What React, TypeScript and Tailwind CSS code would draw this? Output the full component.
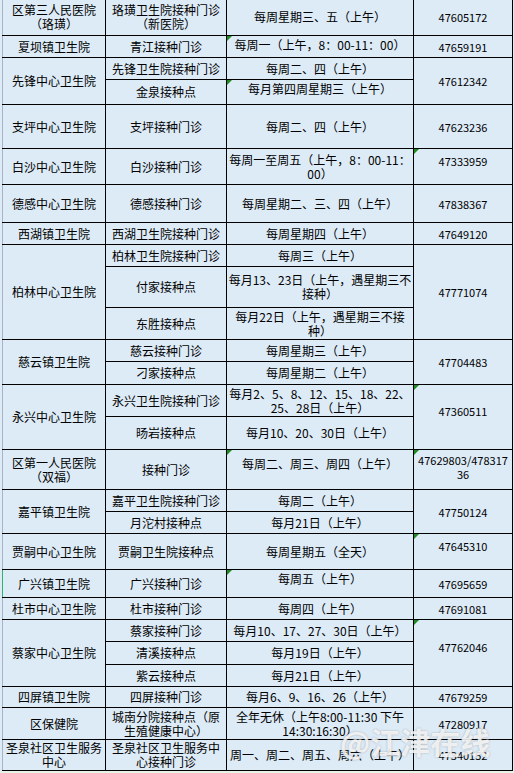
import React from 'react';

type Sub = {
  h: number;
  site: string[];
  time: string[];
  flag?: boolean;
  timeCls?: string;
};

type Group = {
  name: string[];
  phone: string[];
  phoneFlag?: boolean;
  phoneCls?: string;
  mark?: boolean;
  subs: Sub[];
};

const groups: Group[] = [
  {
    name: ['区第三人民医院', '（珞璜）'],
    phone: ['47605172'],
    subs: [{ h: 37, site: ['珞璜卫生院接种门诊', '（新医院）'], time: ['每周星期三、五（上午）'] }],
  },
  {
    name: ['夏坝镇卫生院'],
    phone: ['47659191'],
    subs: [{ h: 22, site: ['青江接种门诊'], time: ['每周一（上午，8：00-11：00）'], flag: true, timeCls: 'pb-[4px]' }],
  },
  {
    name: ['先锋中心卫生院'],
    phone: ['47612342'],
    subs: [
      { h: 22, site: ['先锋卫生院接种门诊'], time: ['每周二、四（上午）'] },
      { h: 25, site: ['金泉接种点'], time: ['每月第四周星期三（上午）'], flag: true, timeCls: 'pb-[7px]' },
    ],
  },
  {
    name: ['支坪中心卫生院'],
    phone: ['47623236'],
    subs: [{ h: 44, site: ['支坪接种门诊'], time: ['每周二、四（上午）'] }],
  },
  {
    name: ['白沙中心卫生院'],
    phone: ['47333959'],
    phoneFlag: true,
    phoneCls: 'pb-[12px]',
    subs: [{ h: 36, site: ['白沙接种门诊'], time: ['每周一至周五（上午，8：00-11：', '00）'] }],
  },
  {
    name: ['德感中心卫生院'],
    phone: ['47838367'],
    subs: [{ h: 38, site: ['德感接种门诊'], time: ['每周星期二、三、四（上午）'] }],
  },
  {
    name: ['西湖镇卫生院'],
    phone: ['47649120'],
    subs: [{ h: 22, site: ['西湖卫生院接种门诊'], time: ['每周星期四（上午）'] }],
  },
  {
    name: ['柏林中心卫生院'],
    phone: ['47771074'],
    subs: [
      { h: 22, site: ['柏林卫生院接种门诊'], time: ['每周三（上午）'] },
      { h: 41, site: ['付家接种点'], time: ['每月13、23日（上午，遇星期三不', '接种）'] },
      { h: 32, site: ['东胜接种点'], time: ['每月22日（上午，遇星期三不接', '种）'] },
    ],
  },
  {
    name: ['慈云镇卫生院'],
    phone: ['47704483'],
    subs: [
      { h: 22, site: ['慈云接种门诊'], time: ['每周星期三（上午）'] },
      { h: 23, site: ['刁家接种点'], time: ['每周星期二（上午）'] },
    ],
  },
  {
    name: ['永兴中心卫生院'],
    phone: ['47360511'],
    phoneFlag: true,
    phoneCls: 'pb-[12px]',
    subs: [
      { h: 32, site: ['永兴卫生院接种门诊'], time: ['每月2、5、8、12、15、18、22、', '25、28日（上午）'] },
      { h: 33, site: ['旸岩接种点'], time: ['每月10、20、30日（上午）'] },
    ],
  },
  {
    name: ['区第一人民医院', '（双福）'],
    phone: ['47629803/478317', '36'],
    phoneFlag: true,
    phoneCls: 'pb-[6px]',
    subs: [{ h: 40, site: ['接种门诊'], time: ['每周二、周三、周四（上午）'], flag: true, timeCls: 'pb-[12px]' }],
  },
  {
    name: ['嘉平镇卫生院'],
    phone: ['47750124'],
    subs: [
      { h: 22, site: ['嘉平卫生院接种门诊'], time: ['每周二（上午）'] },
      { h: 22, site: ['月沱村接种点'], time: ['每月21日（上午）'] },
    ],
  },
  {
    name: ['贾嗣中心卫生院'],
    phone: ['47645310'],
    phoneFlag: true,
    phoneCls: 'pb-[12px]',
    subs: [{ h: 36, site: ['贾嗣卫生院接种点'], time: ['每周星期五（全天）'] }],
  },
  {
    name: ['广兴镇卫生院'],
    phone: ['47695659'],
    mark: true,
    subs: [{ h: 28, site: ['广兴接种门诊'], time: ['每周五（上午）'], flag: true, timeCls: 'pb-[10px]' }],
  },
  {
    name: ['杜市中心卫生院'],
    phone: ['47691081'],
    subs: [{ h: 22, site: ['杜市接种门诊'], time: ['每周四（上午）'] }],
  },
  {
    name: ['蔡家中心卫生院'],
    phone: ['47762046'],
    phoneFlag: true,
    phoneCls: 'pb-[12px]',
    subs: [
      { h: 22, site: ['蔡家接种门诊'], time: ['每月10、17、27、30日（上午）'] },
      { h: 23, site: ['清溪接种点'], time: ['每月19日（上午）'] },
      { h: 22, site: ['紫云接种点'], time: ['每月21日（上午）'] },
    ],
  },
  {
    name: ['四屏镇卫生院'],
    phone: ['47679259'],
    subs: [{ h: 21, site: ['四屏接种门诊'], time: ['每月6、9、16、26（上午）'] }],
  },
  {
    name: ['区保健院'],
    phone: ['47280917'],
    subs: [{ h: 32, site: ['城南分院接种点（原', '生殖健康中心）'], time: ['全年无休（上午8:00-11:30 下午', '14:30:16:30）'] }],
  },
  {
    name: ['圣泉社区卫生服务', '中心'],
    phone: ['47340152'],
    subs: [{ h: 31, site: ['圣泉社区卫生服务中', '心接种门诊'], time: ['周一、周二、周五、周六（上午）'] }],
  },
];

const rowH: Record<number, string> = {
  21: 'h-[21px]',
  22: 'h-[22px]',
  23: 'h-[23px]',
  25: 'h-[25px]',
  28: 'h-[28px]',
  31: 'h-[31px]',
  32: 'h-[32px]',
  33: 'h-[33px]',
  36: 'h-[36px]',
  37: 'h-[37px]',
  38: 'h-[38px]',
  40: 'h-[40px]',
  41: 'h-[41px]',
  44: 'h-[44px]',
};

function Lines({ lines }: { lines: string[] }) {
  return (
    <>
      {lines.map((l, i) => (
        <div key={i} className="whitespace-nowrap">
          {l}
        </div>
      ))}
    </>
  );
}

function Flag() {
  return (
    <span className="absolute left-0 top-0 h-0 w-0 border-t-[5px] border-r-[5px] border-t-[#1e8c1e] border-r-transparent" />
  );
}

const cell = 'relative border border-black p-0 text-center align-middle';

export default function App() {
  return (
    <div className="relative h-[773px] w-[514px] overflow-hidden bg-[#ddebf7] font-['Noto_Sans_CJK_SC','Noto_Sans',sans-serif] text-[12px] leading-[14px] text-black">
      <table className="ml-[2px] -mt-[2px] w-[511px] table-fixed border-collapse">
        <colgroup>
          <col className="w-[103px]" />
          <col className="w-[121px]" />
          <col className="w-[187px]" />
          <col className="w-[99px]" />
        </colgroup>
        <tbody>
          {groups.map((g, gi) =>
            g.subs.map((s, si) => (
              <tr key={`${gi}-${si}`} className={rowH[s.h]}>
                {si === 0 && (
                  <td
                    rowSpan={g.subs.length}
                    className={`${cell} ${g.mark ? 'border-l-[#2fb36a]' : 'border-l-[#aab2c8]'}`}>
                    <Lines lines={g.name} />
                  </td>
                )}
                <td className={cell}>
                  <Lines lines={s.site} />
                </td>
                <td className={`${cell} ${s.timeCls ?? ''}`}>
                  {s.flag && <Flag />}
                  <Lines lines={s.time} />
                </td>
                {si === 0 && (
                  <td rowSpan={g.subs.length} className={`${cell} text-[11px] ${g.phoneCls ?? ''}`}>
                    {g.phoneFlag && <Flag />}
                    <Lines lines={g.phone} />
                  </td>
                )}
              </tr>
            ))
          )}
        </tbody>
      </table>
      <div className="h-[4px] bg-[#e6f2e6]" />
      <div className="pointer-events-none absolute left-[340px] top-[726px] text-[30px] font-bold leading-[30px] text-white/80 [text-shadow:0_0_2px_rgba(110,110,110,0.55)]">
        @江津在线
      </div>
    </div>
  );
}
